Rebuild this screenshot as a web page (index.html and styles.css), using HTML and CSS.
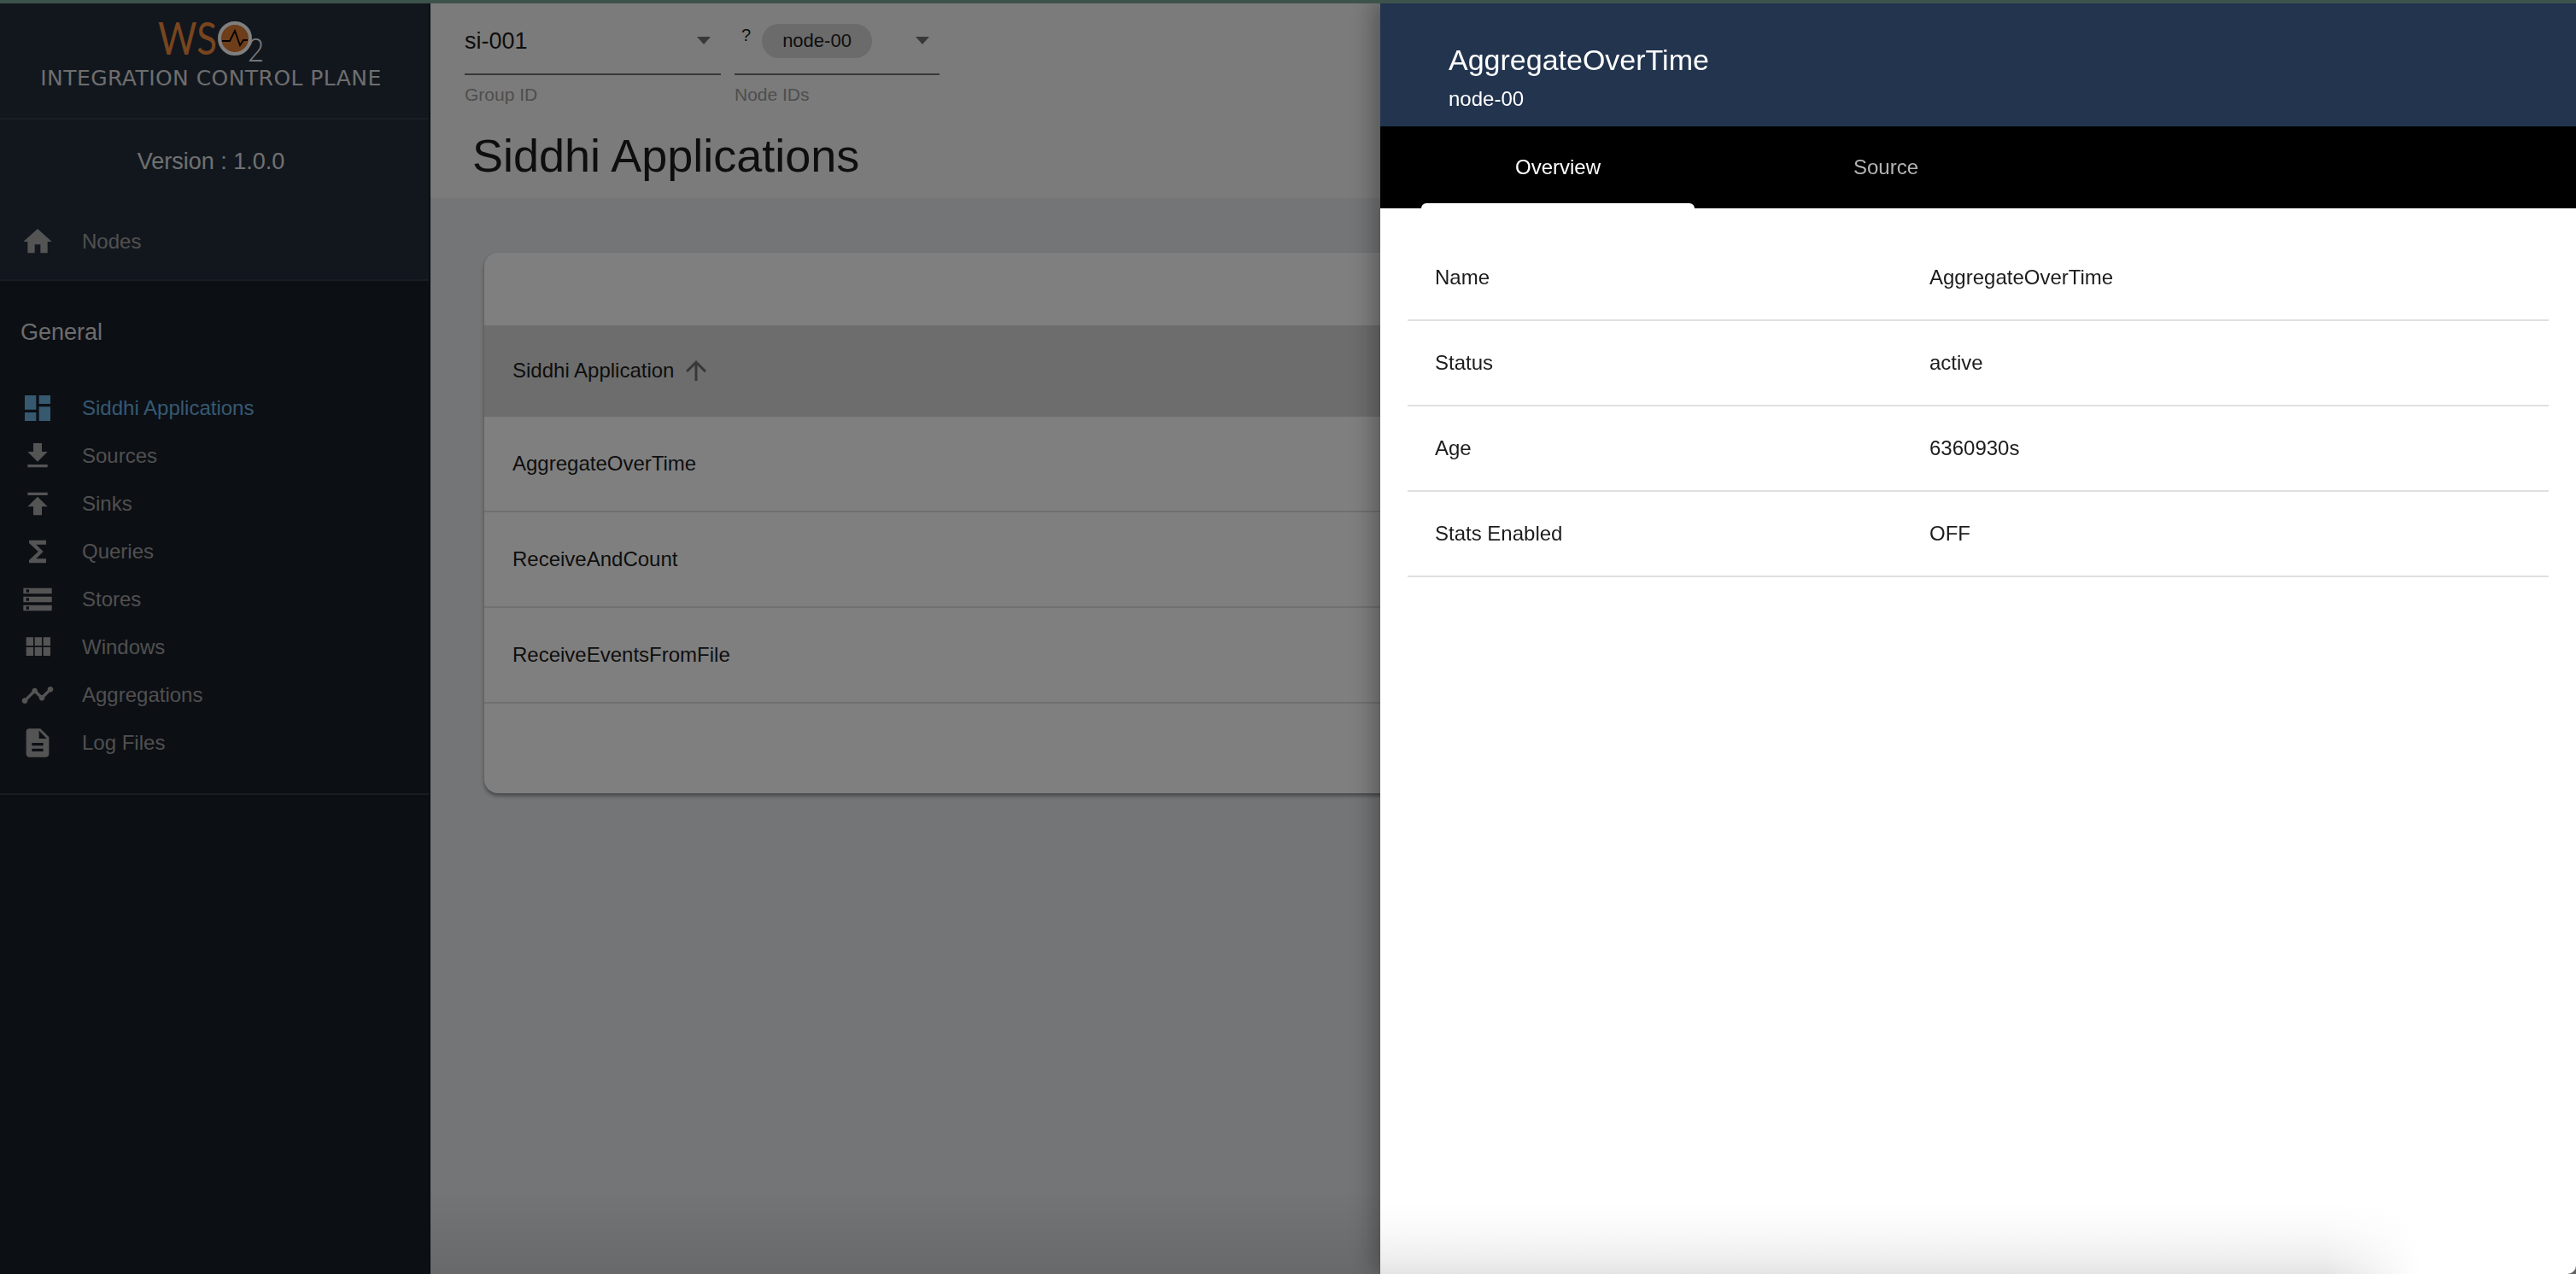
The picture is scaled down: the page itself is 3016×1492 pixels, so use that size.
FILE: index.html
```html
<!DOCTYPE html>
<html lang="en">
<head>
  <meta charset="UTF-8">
  <title>Siddhi Applications - Integration Control Plane</title>
  <link rel="stylesheet" href="styles.css">
</head>
<body>

<div class="app">
  <aside class="sidebar">
    <div class="brand">
      <svg class="logo" width="130" height="88" viewBox="0 -24 130 88">
        <text class="logo-ws" x="3" y="40" textLength="69" lengthAdjust="spacingAndGlyphs">WS</text>
        <circle cx="93" cy="21" r="18" fill="#dd7a33" stroke="#fff" stroke-width="4"/>
        <path d="M78 24h9l6-12 6 17 4-6h5" fill="none" stroke="#000" stroke-width="1.8"/>
        <text class="logo-two" x="108" y="48" textLength="19" lengthAdjust="spacingAndGlyphs">2</text>
      </svg>
      <div class="brand-name">INTEGRATION CONTROL PLANE</div>
    </div>
    <div class="version">Version : 1.0.0</div>
    <a class="nav-item nodes">
      <svg class="icon" viewBox="0 0 24 24"><path d="M10 20v-6h4v6h5v-8h3L12 3 2 12h3v8z"/></svg>
      Nodes
    </a>
    <div class="general-title">General</div>
    <nav class="nav-list">
      <a class="nav-item active">
        <svg class="icon" viewBox="0 0 24 24"><path d="M3 13h8V3H3v10zm0 8h8v-6H3v6zm10 0h8V11h-8v10zm0-18v6h8V3h-8z"/></svg>
        Siddhi Applications
      </a>
      <a class="nav-item">
        <svg class="icon" viewBox="0 0 24 24"><path d="M19 9h-4V3H9v6H5l7 7 7-7zM5 18v2h14v-2H5z"/></svg>
        Sources
      </a>
      <a class="nav-item">
        <svg class="icon" viewBox="0 0 24 24"><path d="M5 4v2h14V4H5zm0 10h4v6h6v-6h4l-7-7-7 7z"/></svg>
        Sinks
      </a>
      <a class="nav-item">
        <svg class="icon" viewBox="0 0 24 24"><path d="M18 4H6v2l6.5 6L6 18v2h12v-3h-7l5-5-5-5h7z"/></svg>
        Queries
      </a>
      <a class="nav-item">
        <svg class="icon" viewBox="0 0 24 24"><path d="M2 20h20v-4H2v4zm2-3h2v2H4v-2zM2 4v4h20V4H2zm4 3H4V5h2v2zm-4 7h20v-4H2v4zm2-3h2v2H4v-2z"/></svg>
        Stores
      </a>
      <a class="nav-item">
        <svg class="icon" viewBox="0 0 24 24"><path d="M4 11h5V5H4v6zm0 7h5v-6H4v6zm6 0h5v-6h-5v6zm6 0h5v-6h-5v6zm-6-7h5V5h-5v6zm6-6v6h5V5h-5z"/></svg>
        Windows
      </a>
      <a class="nav-item">
        <svg class="icon" viewBox="0 0 24 24"><path d="M23 8c0 1.100-.9 2-2 2-.18 0-.35-.02-.51-.07l-3.560 3.550c.05.160.070.340.070.520 0 1.100-.9 2-2 2s-2-.9-2-2c0-.18.020-.36.070-.52l-2.550-2.550c-.16.050-.34.070-.52.070s-.36-.02-.52-.07l-4.550 4.560c.05.160.070.330.070.510 0 1.100-.9 2-2 2s-2-.9-2-2 .9-2 2-2c.18 0 .35.020.51.070l4.560-4.550C8.020 9.360 8 9.180 8 9c0-1.100.9-2 2-2s2 .9 2 2c0 .18-.02.360-.07.520l2.550 2.550c.16-.05.340-.07.520-.07s.36.020.52.070l3.550-3.560C19.020 8.350 19 8.180 19 8c0-1.100.9-2 2-2s2 .9 2 2z"/></svg>
        Aggregations
      </a>
      <a class="nav-item">
        <svg class="icon" viewBox="0 0 24 24"><path d="M14 2H6c-1.100 0-2 .9-2 2v16c0 1.100.9 2 2 2h12c1.100 0 2-.9 2-2V8l-6-6zm2 16H8v-2h8v2zm0-4H8v-2h8v2zm-3-5V3.500L18.500 9H13z"/></svg>
        Log Files
      </a>
    </nav>
  </aside>

  <main class="content">
    <div class="page-head">
      <div class="filters">
        <div class="filter group-filter">
          <div class="select">
            <span class="select-value">si-001</span>
            <span class="caret"></span>
          </div>
          <div class="filter-label">Group ID</div>
        </div>
        <div class="filter node-filter">
          <div class="select">
            <span class="question">?</span>
            <span class="chip">node-00</span>
            <span class="caret"></span>
          </div>
          <div class="filter-label">Node IDs</div>
        </div>
      </div>
      <h1 class="page-title">Siddhi Applications</h1>
    </div>

    <div class="table-wrap">
      <div class="card">
        <div class="card-toolbar"></div>
        <div class="table-head">
          Siddhi Application
          <svg class="sort-icon" viewBox="0 0 24 24"><path d="M4 12l1.410 1.410L11 7.830V20h2V7.830l5.580 5.590L20 12l-8-8-8 8z"/></svg>
        </div>
        <div class="table-row">AggregateOverTime</div>
        <div class="table-row">ReceiveAndCount</div>
        <div class="table-row">ReceiveEventsFromFile</div>
        <div class="card-foot"></div>
      </div>
    </div>

    <footer class="copyright">© 2005 - 2020 WSO2 Inc. All Rights Reserved.</footer>
  </main>
</div>

<div class="scrim"></div>

<section class="drawer">
  <div class="drawer-head">
    <div class="drawer-title">AggregateOverTime</div>
    <div class="drawer-sub">node-00</div>
  </div>
  <div class="tabs">
    <div class="tab selected">Overview</div>
    <div class="tab">Source</div>
  </div>
  <div class="details">
    <div class="detail-row"><span class="detail-key">Name</span><span>AggregateOverTime</span></div>
    <div class="detail-row"><span class="detail-key">Status</span><span>active</span></div>
    <div class="detail-row"><span class="detail-key">Age</span><span>6360930s</span></div>
    <div class="detail-row"><span class="detail-key">Stats Enabled</span><span>OFF</span></div>
  </div>
  <div class="drawer-fade"></div>
</section>

<div class="top-strip"></div>

</body>
</html>
```

FILE: styles.css
```css
* {
  box-sizing: border-box;
}
html, body {
  height: 100%;
}
html {
  background: #000;
}
body {
  margin: 0;
  font-family: "Liberation Sans", Arial, sans-serif;
  font-size: 24px;
  color: #1c1c1c;
  overflow: hidden;
}
.top-strip {
  position: fixed;
  top: 0; left: 0;
  width: 100%; height: 4px;
  background: #3c534c;
}
.app {
  display: flex;
  height: 100%;
}

/* Sidebar */
.sidebar {
  width: 504px;
  flex: none;
  background: #181f29;
  border-right: 2px solid #141a22;
  color: #fff;
}
.brand {
  height: 140px;
  padding: 0 8px 0 0;
  text-align: center;
  background: #242f3c;
  border-bottom: 2px solid #323c48;
}
.logo {
  display: block;
  margin: 0 auto -12px;
}
.logo-ws {
  font-family: "Lato", sans-serif;
  font-weight: 400;
  font-size: 52px;
  fill: #f08a3c;
}
.logo-two {
  font-family: "Lato", sans-serif;
  font-weight: 300;
  font-size: 38px;
  fill: #fff;
}
.brand-name {
  position: relative;
  font-family: "DejaVu Sans", sans-serif;
  font-size: 25px;
  letter-spacing: 0.45px;
  line-height: 32px;
  color: #dcdcdc;
}
.version {
  height: 96px;
  padding-right: 8px;
  line-height: 98px;
  text-align: center;
  font-size: 27px;
  background: #242f3c;
  color: #e0e0e0;
}
.nav-item {
  display: flex;
  align-items: center;
  height: 56px;
  padding-left: 24px;
  color: #a0a0a0;
}
.nodes {
  height: 93px;
  padding-top: 2px;
  background: #242f3c;
  border-bottom: 2px solid #323c48;
}
.icon {
  width: 40px;
  height: 40px;
  margin-right: 32px;
  fill: #a8a8a8;
}
.general-title {
  height: 121px;
  padding: 45px 0 0 24px;
  font-size: 27px;
  color: #d8d8d8;
}
.nav-list {
  padding-bottom: 31px;
  border-bottom: 2px solid #323c48;
}
.nav-item.active {
  color: #6cb2e0;
}
.nav-item.active .icon {
  fill: #6cb2e0;
}

/* Main content */
.content {
  flex: 1;
  display: flex;
  flex-direction: column;
  background: #e8eaee;
  position: relative;
}
.content::after {
  content: "";
  position: absolute;
  left: 0; right: 0; bottom: 0;
  height: 100px;
  background: linear-gradient(to bottom, rgba(0,0,0,0), rgba(0,0,0,0.1));
}
.page-head {
  height: 232px;
  padding: 24px 0 0 40px;
  background: #f6f6f6;
}
.filters {
  display: flex;
  gap: 16px;
}
.select {
  display: flex;
  align-items: flex-start;
  height: 64px;
  border-bottom: 2px solid #707070;
  position: relative;
}
.group-filter .select {
  width: 300px;
}
.node-filter .select {
  width: 240px;
}
.select-value {
  margin-top: 8px;
  font-size: 27px;
  line-height: 32px;
}
.caret {
  position: absolute;
  top: 19px;
  right: 12px;
  border-left: 8px solid transparent;
  border-right: 8px solid transparent;
  border-top: 9px solid #707070;
}
.question {
  margin: 6px 13px 0 8px;
  font-size: 20px;
}
.chip {
  height: 40px;
  margin-top: 4px;
  padding: 0 24px;
  line-height: 40px;
  font-size: 22px;
  border-radius: 20px;
  background: #d6d6d6;
}
.filter-label {
  margin-top: 11px;
  font-size: 21px;
  color: #9c9c9c;
}
.page-title {
  margin: 29px 0 0 9px;
  font-size: 54px;
  font-weight: 400;
  line-height: 60px;
}
.table-wrap {
  flex: 1;
  padding: 64px 0 0 63px;
}
.card {
  height: 633px;
  background: #fff;
  border-radius: 16px;
  box-shadow: 0 3px 4px rgba(0,0,0,0.4);
  overflow: hidden;
}
.card-toolbar {
  height: 85px;
}
.table-head {
  display: flex;
  align-items: center;
  height: 107px;
  padding: 0 0 2px 33px;
  background: #dadada;
}
.sort-icon {
  width: 36px;
  height: 36px;
  margin-left: 8px;
  fill: #707070;
}
.table-row {
  display: flex;
  align-items: center;
  height: 112px;
  padding-left: 33px;
  border-bottom: 2px solid #e0e0e0;
}
.copyright {
  position: absolute;
  top: 1436px;
  left: 1504px;
  font-size: 23px;
  white-space: nowrap;
  color: #707070;
}
.scrim {
  position: fixed;
  top: 0; left: 0; right: 0; bottom: 0;
  background: rgba(0,0,0,0.5);
}

/* Details drawer */
.drawer {
  position: fixed;
  top: 0; right: 0; bottom: 0;
  width: 1400px;
  background: #fff;
  border-bottom-right-radius: 10px;
  box-shadow: -6px 0 30px rgba(0,0,0,0.35);
  overflow: hidden;
}
.drawer-head {
  height: 148px;
  padding: 46px 0 0 80px;
  background: #22344e;
  color: #fff;
}
.drawer-title {
  font-size: 34px;
  line-height: 48px;
}
.drawer-sub {
  margin-top: 5px;
  font-size: 24px;
  line-height: 34px;
}
.tabs {
  display: flex;
  height: 96px;
  padding-left: 16px;
  background: #000;
}
.tab {
  width: 384px;
  padding-top: 34px;
  text-align: center;
  color: #b4b4b4;
  position: relative;
}
.tab.selected {
  color: #fff;
}
.tab.selected::after {
  content: "";
  position: absolute;
  left: 32px; right: 32px; bottom: 0;
  height: 6px;
  border-radius: 6px 6px 0 0;
  background: #fff;
}
.details {
  padding: 32px 32px 0;
}
.detail-row {
  display: flex;
  align-items: center;
  height: 100px;
  padding-left: 32px;
  border-bottom: 2px solid #e0e0e0;
}
.detail-key {
  width: 579px;
}
.drawer-fade {
  position: absolute;
  left: 0; right: 0; bottom: 0;
  height: 82px;
  background: linear-gradient(to bottom, rgba(228,228,228,0), rgba(228,228,228,0.2) 37%, rgba(228,228,228,0.6) 77%, #e4e4e4);
  -webkit-mask-image: linear-gradient(to right, #000 79%, transparent 87%);
}
```
